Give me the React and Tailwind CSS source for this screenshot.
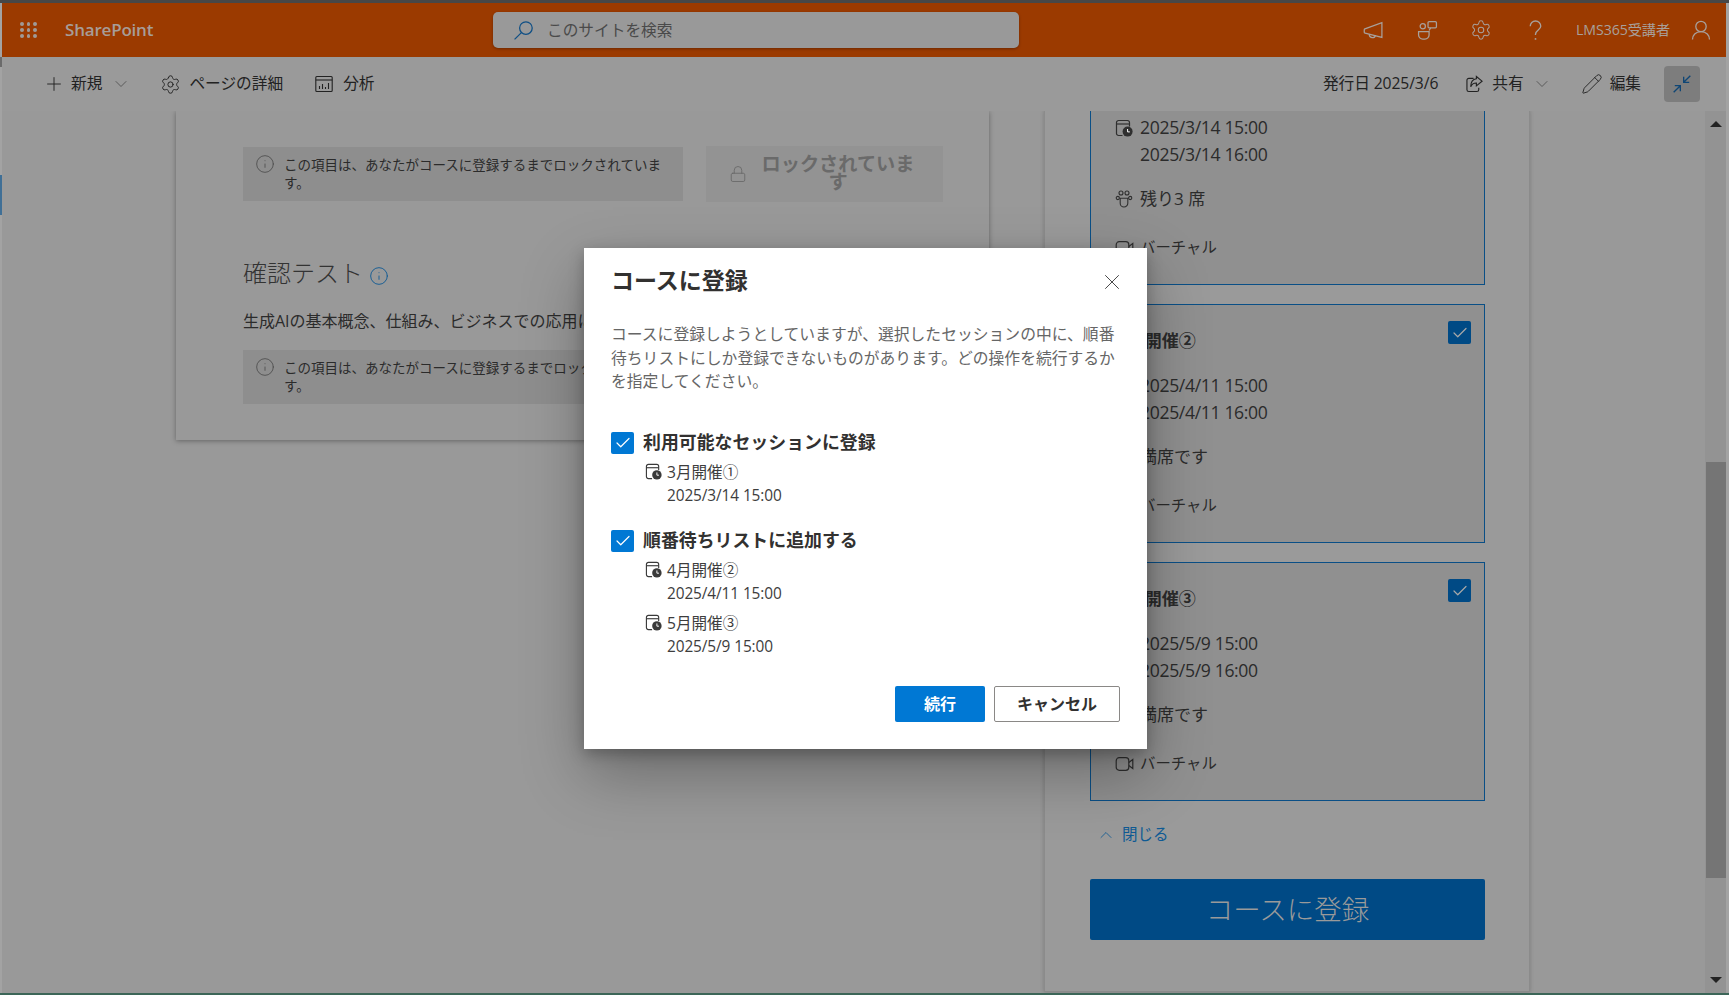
import React from "react";
import { Settings, ChevronDown, ChevronUp, Plus, Pencil, Lock, Info, Check, X } from "lucide-react";

const CalClock = ({ className = "" }) => (
  <svg viewBox="0 0 18 18" className={className} fill="none" stroke="currentColor" strokeWidth="1.2">
    <path d="M7.500 16.500H3.600A2.100 2.100 0 0 1 1.500 14.400V3.600A2.100 2.100 0 0 1 3.600 1.500h8.800a2.100 2.100 0 0 1 2.100 2.100V7.500" />
    <path d="M1.500 5h13" />
    <circle cx="12.600" cy="12.600" r="5" fill="currentColor" stroke="none" />
    <path d="M12.600 10v2.900h2.200" stroke="#fff" strokeWidth="1" />
  </svg>
);

const Seats = ({ className = "" }) => (
  <svg viewBox="0 0 18 18" className={className} fill="none" stroke="currentColor" strokeWidth="1.1">
    <circle cx="6" cy="3" r="2" />
    <circle cx="12" cy="3" r="2" />
    <circle cx="2.800" cy="8" r="1.600" />
    <circle cx="15.200" cy="8" r="1.600" />
    <path d="M5.200 8.200h7.600v5a3.800 3.800 0 0 1-7.600 0z" />
  </svg>
);

const Camera = ({ className = "" }) => (
  <svg viewBox="0 0 18 14" className={className} fill="none" stroke="currentColor" strokeWidth="1.2">
    <rect x=".7" y=".7" width="12.600" height="12.600" rx="3" />
    <path d="M13.300 5.500 17.300 2.500v9l-4-3" />
  </svg>
);

const Session = ({ title, d1, d2, seat }) => (
  <div className={`relative border border-[#0a4f86] bg-[#909090] px-6 pb-[23px] text-[#2b2b2b] ${title ? "pt-[22px]" : "border-t-0 pt-[3px]"}`}>
    {title && (
      <>
        <div className="h-7 pl-[3px] text-[17px] leading-7 font-bold">{title}</div>
        <div className="absolute right-[13px] top-[16px] flex h-[23px] w-[23px] items-center justify-center rounded-[2px] bg-[#004a85]">
          <Check className="h-[18px] w-[18px] text-[#a8a8a8]" strokeWidth={1.6} />
        </div>
      </>
    )}
    <div className={`${title ? "mt-[17px]" : ""} flex items-start gap-[7px]`}>
      <CalClock className="mt-[5px] h-[18px] w-[18px] text-[#2f2f2f]" />
      <div className="text-[17.6px] leading-[27px] tracking-[-0.35px]">
        <div>{d1}</div>
        <div>{d2}</div>
      </div>
    </div>
    <div className="mt-[17px] flex h-[27px] items-center gap-[7px]">
      <Seats className="h-[18px] w-[18px] text-[#2f2f2f]" />
      <span className="text-[17px] leading-[27px]">{seat}</span>
    </div>
    <div className="mt-[22px] flex h-[27px] items-center gap-[6px]">
      <Camera className="h-[14px] w-[19px] text-[#2f2f2f]" />
      <span className="text-[15.4px] leading-[27px]">バーチャル</span>
    </div>
  </div>
);

const Notice = () => (
  <div className="flex h-[54px] w-[440px] bg-[#8e8e8e] pt-[9px] pl-[12px] text-[13.5px] leading-[18px] text-[#2b2b2b]">
    <Info className="-mt-[2px] h-[20px] w-[20px] shrink-0 text-[#4a4a4a]" strokeWidth={1} />
    <div className="ml-[9px] w-[385px]">この項目は、あなたがコースに登録するまでロックされています。</div>
  </div>
);

const Locked = () => (
  <div className="ml-[23px] -mt-[1px] flex h-[56px] w-[237px] items-center bg-[#939393] pl-[23px] text-[#6a6a6a]">
    <Lock className="h-[22px] w-[18px] shrink-0" strokeWidth={1.2} />
    <div className="ml-[6px] -mt-[2px] w-[170px] text-center text-[19.2px] leading-[18px] font-bold">ロックされています</div>
  </div>
);

const ModalItem = ({ title, date, cls }) => (
  <div className={`ml-[34px] ${cls}`}>
    <div className="flex h-6 items-center">
      <CalClock className="h-[17px] w-[17px] text-[#3a3a3a]" />
      <span className="ml-[5px] text-[15.6px] leading-6 text-[#3d3d3d]">{title}</span>
    </div>
    <div className="ml-[22px] text-[15.4px] leading-6 tracking-[-0.1px] text-[#3d3d3d]">{date}</div>
  </div>
);

const ModalCheck = ({ label, cls }) => (
  <div className={`flex h-[22px] items-center ${cls}`}>
    <div className="flex h-[22px] w-[23px] items-center justify-center rounded-[2px] bg-[#0078d4]">
      <Check className="h-[18px] w-[18px] text-white" strokeWidth={1.6} />
    </div>
    <span className="ml-[9px] text-[17.9px] font-bold text-[#323130]">{label}</span>
  </div>
);

export default function App() {
  return (
    <div
      className="relative flex h-[995px] w-[1729px] flex-col overflow-hidden bg-[#999999] text-[#222]"
      style={{ fontFamily: '"Open Sans","Noto Sans CJK JP",sans-serif' }}
    >
      <div className="h-[3px] shrink-0 bg-[#474747]" />
      <div className="flex min-h-0 flex-1">
        <div className="flex w-[2px] shrink-0 flex-col bg-[#a3a3a3]">
          <div className="mt-[54px] h-[10px] bg-[#6b6b6b]" />
          <div className="mt-[108px] h-[40px] bg-[#3f6f96]" />
        </div>
        <div className="flex min-w-0 flex-1 flex-col">
          {/* suite bar */}
          <header className="flex h-[54px] shrink-0 items-center bg-[#9b3a00]">
            <div className="flex w-[491px] items-center pl-[18px]">
              <div className="grid h-[16px] w-[17px] grid-cols-3 gap-x-[3px] gap-y-[2.500px]">
                {[...Array(9)].map((_, i) => (
                  <span key={i} className="h-[3.700px] w-[3.700px] rounded-full bg-[#a09a96]" />
                ))}
              </div>
              <span className="ml-[28px] text-[17px] font-semibold tracking-[-0.2px] text-[#a79d98]">SharePoint</span>
            </div>
            <div className="flex h-9 w-[526px] items-center rounded-[5px] bg-[#999999] shadow-[0_1px_3px_rgba(0,0,0,0.3)]">
              <svg viewBox="0 0 20 20" className="ml-[20px] h-[21px] w-[21px] text-[#0f4f85]" fill="none" stroke="currentColor" strokeWidth="1.200">
                <circle cx="12.300" cy="7.700" r="6" />
                <path d="M8 12 1.500 18.500" />
              </svg>
              <span className="ml-[13px] mt-[1px] text-[15.7px] text-[#4a4a4a]">このサイトを検索</span>
            </div>
            <div className="ml-auto flex items-center pr-[15px] text-[#a8a09b]">
              <div className="flex w-[54px] justify-center">
                <svg viewBox="0 0 20 20" className="h-[21px] w-[21px]" fill="none" stroke="currentColor" strokeWidth="1.200">
                  <path d="M18 2.500v14L2 12.600a1 1 0 0 1-.8-1V9.300a1 1 0 0 1 .6-.9z" />
                  <path d="M6 13.600a3 3 0 0 0 5.900.9" />
                </svg>
              </div>
              <div className="flex w-[54px] justify-center">
                <svg viewBox="0 0 20 20" className="h-[21px] w-[21px]" fill="none" stroke="currentColor" strokeWidth="1.200">
                  <rect x="10.500" y="1.500" width="8" height="6" rx="1" />
                  <path d="M13 7.500 11.500 10" />
                  <circle cx="5.500" cy="6" r="2.500" />
                  <path d="M1.500 11h10v3.200a4 4 0 0 1-4 4h-2a4 4 0 0 1-4-4z" />
                </svg>
              </div>
              <div className="flex w-[54px] justify-center">
                <Settings className="h-[22px] w-[22px]" strokeWidth={1.1} />
              </div>
              <div className="flex w-[54px] justify-center">
                <svg viewBox="0 0 20 20" className="h-[21px] w-[21px]" fill="none" stroke="currentColor" strokeWidth="1.300">
                  <path d="M5 6a5 5 0 0 1 10 0c0 3.400-5 3.600-5 7.500v.8" />
                  <circle cx="10" cy="18" r=".9" fill="currentColor" stroke="none" />
                </svg>
              </div>
              <span className="ml-[14px] text-[14.2px] tracking-[-0.1px]">LMS365受講者</span>
              <svg viewBox="0 0 20 20" className="ml-[21px] h-5 w-5" fill="none" stroke="currentColor" strokeWidth="1.300">
                <circle cx="10" cy="6.500" r="5.200" />
                <path d="M1.500 19.500c0-4.200 3-7.800 8.500-7.800s8.500 3.600 8.500 7.800" />
              </svg>
            </div>
          </header>

          {/* command bar */}
          <div className="flex h-[54px] shrink-0 items-center bg-[#9a9a9a] pl-[41px] pr-[26px] text-[15.7px] text-[#222]">
            <Plus className="h-[22px] w-[22px] text-[#1f1f1f]" strokeWidth={1} />
            <span className="ml-[6px]">新規</span>
            <ChevronDown className="ml-[9px] h-[20px] w-[20px] text-[#444]" strokeWidth={0.9} />
            <Settings className="ml-[29px] h-[21px] w-[21px] text-[#222]" strokeWidth={1.100} />
            <span className="ml-[8px]">ページの詳細</span>
            <svg viewBox="0 0 18 18" className="ml-[32px] h-[18px] w-[18px] text-[#222]" fill="none" stroke="currentColor" strokeWidth="1.100">
              <rect x=".8" y="1.500" width="16.400" height="15" rx="1" />
              <path d="M.8 5h16.400" />
              <path d="M4.500 14v-3M7.500 14V9M10.500 14v-2M13.500 14V8" />
            </svg>
            <span className="ml-[10px]">分析</span>
            <span className="ml-auto tracking-[-0.1px]">発行日 2025/3/6</span>
            <svg viewBox="0 0 18 18" className="ml-[28px] h-[18px] w-[17px] text-[#222]" fill="none" stroke="currentColor" strokeWidth="1.200">
              <path d="M8 3H3a2 2 0 0 0-2 2v10a2 2 0 0 0 2 2h8.500a2 2 0 0 0 2-2v-2" />
              <path d="M11 1l6 5-6 5V8C8 8 6 9.500 5 12c0-5 2.500-8 6-8.500z" />
            </svg>
            <span className="ml-[9px]">共有</span>
            <ChevronDown className="ml-[8px] h-[20px] w-[20px] text-[#444]" strokeWidth={0.9} />
            <Pencil className="ml-[29px] h-[22px] w-[22px] text-[#222]" strokeWidth={1} />
            <span className="ml-[7px]">編集</span>
            <div className="ml-[23px] flex h-9 w-9 items-center justify-center rounded-[4px] bg-[#7d7d7d]">
              <svg viewBox="0 0 18 18" className="h-5 w-5 text-[#0f4675]" fill="none" stroke="currentColor" strokeWidth="1.200">
                <path d="M16.500 1.500 10.500 7.500M10.500 2.500v5h5" />
                <path d="M1.500 16.500l6-6M7.500 15.500v-5h-5" />
              </svg>
            </div>
          </div>

          {/* content */}
          <div className="flex min-h-0 flex-1 overflow-hidden">
            <div className="flex min-w-0 flex-1 overflow-hidden">
              <main className="ml-[174px] h-[329px] w-[813px] shrink-0 bg-[#999999] pt-[36px] pl-[67px] shadow-[0_1px_5px_rgba(0,0,0,0.35)]">
                <div className="flex items-start">
                  <Notice />
                  <Locked />
                </div>
                <div className="mt-[53px] flex h-9 items-center text-[24px] font-light text-[#333]">
                  <span>確認テスト</span>
                  <Info className="ml-[6px] mt-[5px] h-[20px] w-[20px] text-[#0f5a94]" strokeWidth={1.100} />
                </div>
                <p className="mt-[18px] text-[16px] leading-6 text-[#2b2b2b]">生成AIの基本概念、仕組み、ビジネスでの応用について</p>
                <div className="mt-[17px] flex items-start">
                  <Notice />
                  <Locked />
                </div>
              </main>
              <aside className="ml-[55px] h-[881px] w-[486px] shrink-0 overflow-hidden border-x border-b border-[#8b8b8b] bg-[#9a9a9a] pl-[45px] shadow-[0_0_4px_rgba(0,0,0,0.2)]">
                <div className="flex w-[395px] flex-col gap-[19px]">
                  <Session d1="2025/3/14 15:00" d2="2025/3/14 16:00" seat="残り3 席" />
                  <Session title="4月開催②" d1="2025/4/11 15:00" d2="2025/4/11 16:00" seat="満席です" />
                  <Session title="5月開催③" d1="2025/5/9 15:00" d2="2025/5/9 16:00" seat="満席です" />
                </div>
                <div className="mt-[22px] flex h-6 w-[395px] items-center pl-[6px] text-[15.5px] text-[#0f5a94]">
                  <ChevronUp className="h-[20px] w-[20px]" strokeWidth={1} />
                  <span className="ml-[6px]">閉じる</span>
                </div>
                <div className="mt-[32px] flex h-[61px] w-[395px] items-center justify-center rounded-[2px] bg-[#004a85] text-[27.500px] font-light text-[#9a9a9a]">
                  コースに登録
                </div>
              </aside>
            </div>
            {/* scrollbar */}
            <div className="flex w-[21px] shrink-0 flex-col items-center bg-[#939393]">
              <div className="mt-[10px] h-0 w-0 border-x-[6px] border-b-[6px] border-x-transparent border-b-[#222]" />
              <div className="mt-[335px] h-[416px] w-[20px] bg-[#757575]" />
              <div className="mt-[99px] h-0 w-0 border-x-[6px] border-t-[6px] border-x-transparent border-t-[#222]" />
            </div>
          </div>
        </div>
        <div className="w-[3px] shrink-0 bg-[#a3a3a3]" />
      </div>
      <div className="h-[2px] shrink-0 bg-[#3c6658]" />

      {/* dialog */}
      <div className="absolute left-[584px] top-[248px] h-[501px] w-[563px] bg-white pl-[27px] pr-[28px] pt-[17px] shadow-[0_25px_58px_rgba(0,0,0,0.3),0_5px_14px_rgba(0,0,0,0.25)]">
        <h2 className="text-[23px] leading-[30px] font-bold text-[#323130]">コースに登録</h2>
        <button className="absolute right-[22px] top-[21px] text-[#444]">
          <X className="h-[26px] w-[26px]" strokeWidth={0.9} />
        </button>
        <p className="mt-[28px] w-[512px] text-[15.8px] leading-[23.500px] text-[#666666]">
          コースに登録しようとしていますが、選択したセッションの中に、順番待ちリストにしか登録できないものがあります。どの操作を続行するかを指定してください。
        </p>
        <ModalCheck label="利用可能なセッションに登録" cls="mt-[38px]" />
        <ModalItem title="3月開催①" date="2025/3/14 15:00" cls="mt-[6px]" />
        <ModalCheck label="順番待ちリストに追加する" cls="mt-[22px]" />
        <ModalItem title="4月開催②" date="2025/4/11 15:00" cls="mt-[6px]" />
        <ModalItem title="5月開催③" date="2025/5/9 15:00" cls="mt-[5px]" />
        <div className="-mr-[1px] mt-[27px] flex justify-end gap-[9px]">
          <button className="h-9 w-[90px] rounded-[2px] bg-[#0078d4] text-[16px] font-bold text-white">続行</button>
          <button className="h-9 w-[126px] rounded-[2px] border border-[#8a8886] bg-white text-[16px] font-bold text-[#323130]">キャンセル</button>
        </div>
      </div>
    </div>
  );
}
